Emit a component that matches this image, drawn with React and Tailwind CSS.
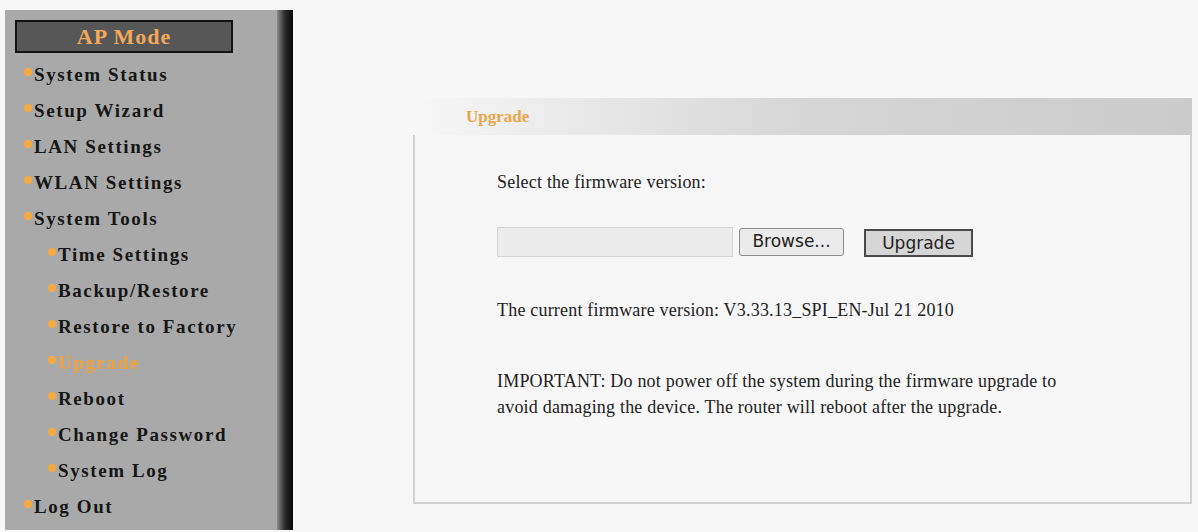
import React from 'react';

const menu = [
  { label: 'System Status', sub: false },
  { label: 'Setup Wizard', sub: false },
  { label: 'LAN Settings', sub: false },
  { label: 'WLAN Settings', sub: false },
  { label: 'System Tools', sub: false },
  { label: 'Time Settings', sub: true },
  { label: 'Backup/Restore', sub: true },
  { label: 'Restore to Factory', sub: true },
  { label: 'Upgrade', sub: true, active: true },
  { label: 'Reboot', sub: true },
  { label: 'Change Password', sub: true },
  { label: 'System Log', sub: true },
  { label: 'Log Out', sub: false },
];

function MenuItem({ item }) {
  return (
    <div className={`flex items-center h-[36px] ${item.sub ? 'pl-[43px]' : 'pl-[19px]'}`}>
      <span className="w-[8px] h-[8px] rounded-full bg-[#f4aa40] blur-[0.5px] mr-[2px] -mt-[5px] shrink-0" />
      <span
        className={`text-[19px] font-bold tracking-[1.6px] leading-none ${
          item.active ? 'text-[#f2a13a] blur-[0.7px]' : 'text-[#161616]'
        }`}
      >
        {item.label}
      </span>
    </div>
  );
}

export default function App() {
  return (
    <div className="w-[1198px] h-[532px] bg-[#f7f7f7] flex overflow-hidden font-['Liberation_Serif','Times_New_Roman',serif]">
      {/* Sidebar */}
      <div className="ml-[5px] mt-[10px] h-[520px] flex">
        <div className="w-[272px] bg-[#a9a9a9] pt-[10px]">
          <div className="ml-[10px] w-[218px] h-[33px] bg-[#575757] border-2 border-[#111] flex items-center justify-center">
            <span className="text-[22px] font-bold tracking-[1px] text-[#f3a85a]">AP Mode</span>
          </div>
          <div className="mt-[3px]">
            {menu.map((item) => (
              <MenuItem key={item.label} item={item} />
            ))}
          </div>
        </div>
        <div className="w-[16px] bg-linear-to-r from-[#8c8c8c] via-[#2a2a2a] to-[#0a0a0a]" />
      </div>

      {/* Main */}
      <div className="ml-[120px] mt-[98px] w-[779px]">
        <div className="h-[37px] bg-linear-to-r from-[#f7f7f7] via-[#d6d6d6] to-[#cbcbcb] flex items-center pl-[53px]">
          <span className="text-[17px] font-bold text-[#e9a64c]">Upgrade</span>
        </div>
        <div className="h-[369px] border-l-2 border-r-2 border-b-2 border-[#d2d2d2] pl-[82px] pt-[34px] text-[18px] tracking-[0.2px] text-[#222] leading-[26px]">
          <p>Select the firmware version:</p>
          <div className="flex items-center mt-[31px] h-[31px]">
            <div className="w-[236px] h-[30px] bg-[#ececec] border border-[#d4d4d4]" />
            <button className="ml-[6px] h-[28px] w-[105px] bg-[#ebebeb] border border-[#8a8a8a] rounded-[3px] text-[17px] tracking-normal text-[#222] font-['DejaVu_Sans',sans-serif] leading-none">
              Browse...
            </button>
            <button className="ml-[20px] mt-[3px] w-[109px] h-[28px] bg-[#d6d6d6] border-2 border-[#4a4a4a] text-[17px] tracking-normal text-[#222] font-['DejaVu_Sans',sans-serif] leading-none">
              Upgrade
            </button>
          </div>
          <p className="mt-[40px]">The current firmware version: V3.33.13_SPI_EN-Jul 21 2010</p>
          <p className="mt-[45px]">
            IMPORTANT: Do not power off the system during the firmware upgrade to
            <br />
            avoid damaging the device. The router will reboot after the upgrade.
          </p>
        </div>
      </div>
    </div>
  );
}
